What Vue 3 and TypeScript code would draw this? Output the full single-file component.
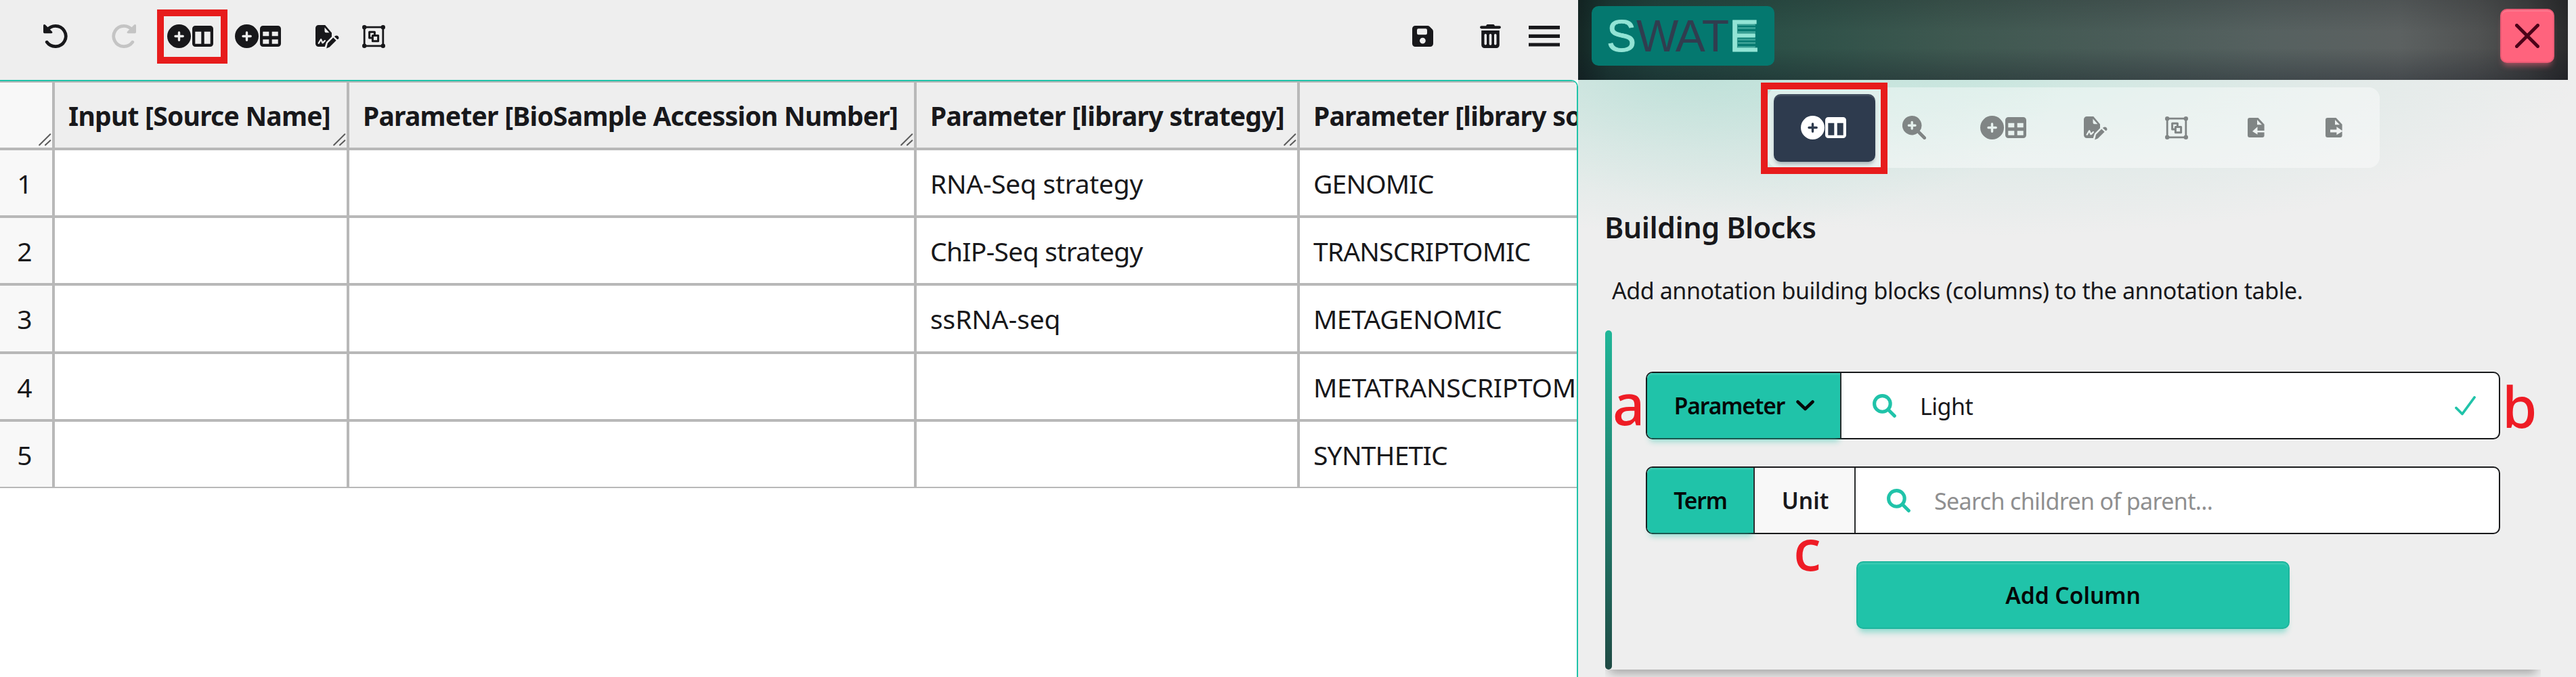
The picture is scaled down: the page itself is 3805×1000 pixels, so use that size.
<script setup lang="ts">
import { defineComponent, h } from 'vue'

interface Cell { text: string; track?: number }
interface Column { key: string; title: string; cells: Cell[] }

const blank = (): Cell[] => Array.from({ length: 5 }, () => ({ text: '' }))

const columns: Column[] = [
  { key: 'source-name', title: 'Input [Source Name]', cells: blank() },
  { key: 'accession', title: 'Parameter [BioSample Accession Number]', cells: blank() },
  {
    key: 'strategy',
    title: 'Parameter [library strategy]',
    cells: [
      { text: 'RNA-Seq strategy', track: -0.3 },
      { text: 'ChIP-Seq strategy', track: -0.7 },
      { text: 'ssRNA-seq', track: -0.1 },
      { text: '' },
      { text: '' },
    ],
  },
  {
    key: 'source',
    title: 'Parameter [library source]',
    cells: [
      { text: 'GENOMIC', track: -0.85 },
      { text: 'TRANSCRIPTOMIC', track: -0.85 },
      { text: 'METAGENOMIC', track: -0.5 },
      { text: 'METATRANSCRIPTOMIC', track: -0.3 },
      { text: 'SYNTHETIC', track: -0.8 },
    ],
  },
]

const rows = [0, 1, 2, 3, 4]

interface Glyph { w: number; h: number; fill?: string; stroke?: { d: string; width: number }[] }

const glyphs: Record<string, Glyph> = {
  undo: {
    w: 36, h: 35,
    fill: 'M1.5 0Q0 0 0 1.8V11.5Q0 13.2 1.7 13.2H12Q14.5 12.8 12.8 10.6L3 .8Q2.2 0 1.5 0Z',
    stroke: [{ d: 'M6 8.2C9 4.4 13 2.4 18 2.4A15.4 15.1 0 1 1 5.2 26.2', width: 4.7 }],
  },
  plus: {
    w: 35, h: 35,
    fill: 'M17.5 0A17.5 17.5 0 1 1 17.5 35A17.5 17.5 0 1 1 17.5 0ZM15.8 12V15.8H12A1.7 1.7 0 0 0 12 19.2H15.8V23.2A1.7 1.7 0 0 0 19.2 23.2V19.2H23.2A1.7 1.7 0 0 0 23.2 15.8H19.2V12A1.7 1.7 0 0 0 15.8 12Z',
  },
  columns: {
    w: 31, h: 31,
    fill: 'M4.5 0H26.5A4.5 4.5 0 0 1 31 4.5V26.5A4.5 4.5 0 0 1 26.5 31H4.5A4.5 4.5 0 0 1 0 26.5V4.5A4.5 4.5 0 0 1 4.5 0ZM4.3 8.8V26.7H13.3V8.8ZM17.7 8.8V26.7H26.7V8.8Z',
  },
  table: {
    w: 31, h: 31,
    fill: 'M4.5 0H26.5A4.5 4.5 0 0 1 31 4.5V26.5A4.5 4.5 0 0 1 26.5 31H4.5A4.5 4.5 0 0 1 0 26.5V4.5A4.5 4.5 0 0 1 4.5 0ZM4.3 8.8V15.3H13.3V8.8ZM17.7 8.8V15.3H26.7V8.8ZM4.3 20.2V26.7H13.3V20.2ZM17.7 20.2V26.7H26.7V20.2Z',
  },
  group: {
    w: 34, h: 34,
    fill: 'M3.2 0A3.2 3.2 0 1 1 3.2 6.4A3.2 3.2 0 1 1 3.2 0ZM30.8 0A3.2 3.2 0 1 1 30.8 6.4A3.2 3.2 0 1 1 30.8 0ZM3.2 27.6A3.2 3.2 0 1 1 3.2 34A3.2 3.2 0 1 1 3.2 27.6ZM30.8 27.6A3.2 3.2 0 1 1 30.8 34A3.2 3.2 0 1 1 30.8 27.6Z',
    stroke: [
      { d: 'M3.2 3.2H30.8V30.8H3.2Z', width: 2.8 },
      { d: 'M13.5 19H10.6V10.2H18.4V13.5', width: 3 },
      { d: 'M15.4 15.4H23.6V23.8H15.4Z', width: 3 },
    ],
  },
  save: {
    w: 31, h: 31,
    fill: 'M4.5 0H22.5Q24.4 0 25.7 1.3L29.7 5.3Q31 6.6 31 8.5V26.5A4.5 4.5 0 0 1 26.5 31H4.5A4.5 4.5 0 0 1 0 26.5V4.5A4.5 4.5 0 0 1 4.5 0ZM9.2 4.3A2.2 2.2 0 0 0 7 6.5V11.1A2.2 2.2 0 0 0 9.2 13.3H19.8A2.2 2.2 0 0 0 22 11.1V6.5A2.2 2.2 0 0 0 19.8 4.3ZM15.4 17.7A4.4 4.4 0 1 0 15.4 26.5A4.4 4.4 0 1 0 15.4 17.7Z',
  },
  trash: {
    w: 31, h: 35,
    fill: 'M9.5 1.2Q10 0 11.3 0H19.7Q21 0 21.5 1.2L22 2.2H28.8A2.1 2.1 0 0 1 28.8 6.5H2.2A2.1 2.1 0 0 1 2.2 2.2H9ZM2.2 9H28.8V30.6A4.4 4.4 0 0 1 24.4 35H6.6A4.4 4.4 0 0 1 2.2 30.6ZM8.2 14A1.8 1.8 0 0 0 6.5 15.8V29A1.8 1.8 0 0 0 10 29V15.8A1.8 1.8 0 0 0 8.2 14ZM15.5 14A1.8 1.8 0 0 0 13.7 15.8V29A1.8 1.8 0 0 0 17.3 29V15.8A1.8 1.8 0 0 0 15.5 14ZM22.8 14A1.8 1.8 0 0 0 21 15.8V29A1.8 1.8 0 0 0 24.5 29V15.8A1.8 1.8 0 0 0 22.8 14Z',
  },
  menu: { w: 46, h: 31, fill: 'M0 0H46V5.2H0ZM0 12.8H46V18H0ZM0 25.4H46V30.6H0Z' },
  signature: {
    w: 35, h: 36,
    fill: 'M4.5 1H14.2L24 12.4V18.3L16 26.2L14.3 31.2L13.8 33H4.5A4.5 4.5 0 0 1 0 28.5V5.5A4.5 4.5 0 0 1 4.5 1ZM13.5 4.5V10A2.2 2.2 0 0 0 15.7 12.2H20.4ZM3.6 27.6L7.2 21.6Q8.4 20.4 9.3 22L10.8 25.6L13.2 23.2Q15 22.4 15 24L14.6 25L11.6 28Q10 29 9.2 27.4L8 24.6L5.4 28.8Q3.8 29.8 3.6 27.6ZM26.2 19.5L30.6 23.8L20.8 33.6L16.2 35.4L18 27.8ZM27.9 17.9L29.2 16.9Q31.4 15.6 33.5 17.6Q35.3 19.8 33.8 21.6L32.4 22.3Z',
  },
  zoomIn: {
    w: 35, h: 35,
    fill: 'M14.2 0A14.2 14.2 0 0 1 25.6 22.6L34.3 31.2A2.2 2.2 0 0 1 31.2 34.3L22.6 25.6A14.2 14.2 0 1 1 14.2 0ZM12.5 9.4V12.5H9.4A1.7 1.7 0 0 0 9.4 15.9H12.5V19A1.7 1.7 0 0 0 15.9 19V15.9H19A1.7 1.7 0 0 0 19 12.5H15.9V9.4A1.7 1.7 0 0 0 12.5 9.4Z',
    stroke: [{ d: 'M25 25L32.6 32.6', width: 4.6 }],
  },
  search: {
    w: 35, h: 35,
    stroke: [
      { d: 'M14.4 2.6A11.8 11.8 0 1 1 14.4 26.2A11.8 11.8 0 1 1 14.4 2.6Z', width: 5.1 },
      { d: 'M23.5 23.5L32.3 32.3', width: 5.1 },
    ],
  },
  fileIn: {
    w: 25, h: 29,
    fill: 'M3 0H15.5L24.6 9.8V19H14.5V13.2L7 20L14.5 24.8V21.6H24.6V26A3 3 0 0 1 21.6 29H3A3 3 0 0 1 0 26V3A3 3 0 0 1 3 0ZM14 3V10.3H21Z',
  },
  fileOut: {
    w: 25, h: 29,
    fill: 'M3 0H15.5L24.6 9.8V19L16.4 13.2V17.6H7V21.4H16.4V25.2L24.6 20.2V26A3 3 0 0 1 21.6 29H3A3 3 0 0 1 0 26V3A3 3 0 0 1 3 0ZM14 3V10.3H21Z',
  },
  close: { w: 36, h: 36, stroke: [{ d: 'M2.5 2.5L33.5 33.5M33.5 2.5L2.5 33.5', width: 5 }] },
  chevron: { w: 27, h: 16, stroke: [{ d: 'M2.5 2.5L13.5 13L24.5 2.5', width: 4.6 }] },
  check: { w: 31, h: 29, stroke: [{ d: 'M2 17.5L11 26.5L29 2', width: 3.8 }] },
  grip: { w: 19, h: 19, stroke: [{ d: 'M1.2 17.3L17.3 1.2M10 17.3L17.3 10.4', width: 2 }] },
}

const Icon = defineComponent({
  props: { name: { type: String, required: true } },
  setup(props) {
    return () => {
      const g = glyphs[props.name]
      return h('svg', { width: g.w, height: g.h, viewBox: `0 0 ${g.w} ${g.h}`, 'aria-hidden': 'true' }, [
        g.fill ? h('path', { d: g.fill, fill: 'currentColor', 'fill-rule': 'evenodd' }) : null,
        ...(g.stroke ?? []).map((s) =>
          h('path', { d: s.d, fill: 'none', stroke: 'currentColor', 'stroke-width': s.width, 'stroke-linecap': 'round', 'stroke-linejoin': 'round' }),
        ),
      ])
    }
  },
})
</script>

<template>
  <div class="app">
    <section class="main">
      <header class="toolbar">
        <button class="tool undo"><Icon name="undo" /></button>
        <button class="tool redo"><Icon name="undo" /></button>
        <button class="tool add-column"><Icon name="plus" /><Icon name="columns" /><span class="mark mark-toolbar"></span></button>
        <button class="tool add-table"><Icon name="plus" /><Icon name="table" /></button>
        <button class="tool sign"><Icon name="signature" /></button>
        <button class="tool group"><Icon name="group" /></button>
        <span class="spacer"></span>
        <button class="tool save"><Icon name="save" /></button>
        <button class="tool trash"><Icon name="trash" /></button>
        <button class="tool menu"><Icon name="menu" /></button>
      </header>

      <div class="table-wrap">
        <div class="table-frame">
          <div class="grid">
            <div class="col index">
              <div class="head"><span class="grip"><Icon name="grip" /></span></div>
              <div v-for="r in rows" :key="r" class="cell">{{ r + 1 }}</div>
            </div>
            <div v-for="c in columns" :key="c.key" class="col" :class="c.key">
              <div class="head">{{ c.title }}<span class="grip"><Icon name="grip" /></span></div>
              <div v-for="r in rows" :key="r" class="cell">
                <span :style="{ letterSpacing: (c.cells[r].track ?? 0) + 'px' }">{{ c.cells[r].text }}</span>
              </div>
            </div>
          </div>
        </div>
      </div>
    </section>

    <aside class="side">
      <header class="banner">
        <div class="logo">
          <span class="lt mint">S</span><span class="lt">W</span><span class="lt a">A</span><span class="lt t">T</span><span class="lt mint e">E<i class="bars"></i></span>
        </div>
        <button class="close"><Icon name="close" /></button>
      </header>

      <div class="panel">
        <nav class="tabs">
          <button class="tab active"><Icon name="plus" /><Icon name="columns" /></button>
          <button class="tab t-zoom"><Icon name="zoomIn" /></button>
          <button class="tab t-table"><Icon name="plus" /><Icon name="table" /></button>
          <button class="tab t-sign"><Icon name="signature" /></button>
          <button class="tab t-group"><Icon name="group" /></button>
          <button class="tab t-in"><Icon name="fileIn" /></button>
          <button class="tab t-out"><Icon name="fileOut" /></button>
          <span class="mark mark-tab"></span>
        </nav>

        <h1>Building Blocks</h1>
        <p class="desc">Add annotation building blocks (columns) to the annotation table.</p>

        <div class="card">
          <div class="rail"></div>
          <div class="form">
            <div class="field">
              <button class="seg primary param"><span>Parameter</span><Icon name="chevron" /></button>
              <div class="input"><Icon name="search" /><span class="value">Light</span><span class="ok"><Icon name="check" /></span></div>
              <span class="note note-a">a</span>
              <span class="note note-b">b</span>
            </div>
            <div class="field">
              <button class="seg primary term">Term</button>
              <button class="seg unit">Unit</button>
              <div class="input"><Icon name="search" /><span class="value hint">Search children of parent...</span></div>
              <span class="note note-c">c</span>
            </div>
            <button class="submit">Add Column</button>
          </div>
        </div>
      </div>
    </aside>
  </div>
</template>

<style>
body { margin: 0; background: #fff; overflow: hidden; }
</style>

<style scoped>
* { box-sizing: border-box; }
svg { display: block; flex: none; }
button { font: inherit; color: inherit; border: 0; padding: 0; margin: 0; background: none; }
.app {
  display: flex;
  width: 3805px;
  height: 1000px;
  overflow: hidden;
  color: #18181b;
  font-family: "Noto Sans", "Open Sans", sans-serif;
}
.main { width: 2331px; flex: none; display: flex; flex-direction: column; background: #eee; }

.toolbar { height: 118px; flex: none; display: flex; align-items: center; padding: 0 27px 11px 64px; }
.tool { display: flex; align-items: center; position: relative; }
.redo { margin-left: 65px; color: #c4c4c4; transform: scaleX(-1); }
.add-column { margin-left: 46px; gap: 2px; }
.add-table { margin-left: 32px; gap: 2px; }
.sign { margin-left: 51px; }
.group { margin-left: 34px; }
.spacer { flex: 1; }
.trash { margin-left: 69px; }
.menu { margin-left: 41px; }
.mark { position: absolute; border: 10px solid #e71c1c; pointer-events: none; z-index: 3; }
.mark-toolbar { left: -15px; top: -22px; width: 104px; height: 80px; }

.table-wrap { flex: 1; min-height: 0; background: #fff; display: flex; }
.table-frame {
  flex: 1;
  min-width: 0;
  background: #fff;
  border: solid #20c3a9;
  border-width: 2px 2px 0 0;
  border-top-right-radius: 10px;
  overflow: hidden;
}
.grid { display: flex; border-top: 2px solid #b8b8b8; border-bottom: 2px solid #b8b8b8; width: 2700px; font-size: 39px; }
.col { flex: none; border-right: 4px solid #b8b8b8; }
.index { width: 81px; }
.source-name { width: 435px; }
.accession { width: 838px; }
.strategy { width: 566px; }
.source { width: 780px; }
.head {
  position: relative;
  height: 96px;
  display: flex;
  align-items: center;
  padding-left: 20px;
  background: #eee;
  font-weight: 700;
  letter-spacing: -0.75px;
  white-space: nowrap;
}
.grip { position: absolute; right: 1px; bottom: 2px; color: #5a5a5a; }
.index .head { background: #f8f8f8; }
.cell {
  height: 100px;
  border-top: 4px solid #b8b8b8;
  background: #fff;
  display: flex;
  align-items: center;
  padding-left: 20px;
  white-space: nowrap;
}
.cell:nth-child(4) { height: 101px; }
.index .cell { background: #f8f8f8; justify-content: center; padding: 0 4px 0 0; }

.side { flex: none; width: 1474px; background: #eee; display: flex; flex-direction: column; }
.banner {
  width: 1462px;
  height: 118px;
  flex: none;
  display: flex;
  align-items: flex-start;
  justify-content: space-between;
  padding: 9px 20px 0;
  background:
    linear-gradient(to bottom, rgba(10, 14, 18, 0.16), transparent 40%, transparent 60%, rgba(14, 18, 30, 0.3)),
    linear-gradient(to right, #142624 0, #1c3a35 3%, #22463f 8%, #2c5047 20%, #3e5850 38%, #4a5c58 55%, #566160 70%, #5c6161 83%, #505252 91%, #404141 96%, #2b2b2c 100%);
}
.logo { width: 270px; height: 88px; border-radius: 10px; background: #04786f; display: flex; padding-left: 22px; }
.lt { font: 66px/88px "Liberation Sans", Arial, sans-serif; color: #303d4f; height: 88px; position: relative; }
.lt.a { margin-left: -4.5px; }
.lt.t { margin-left: -5px; }
.lt.mint { color: #92e4d5; -webkit-text-stroke: 0.8px #92e4d5; }
.bars {
  position: absolute;
  left: 13px;
  top: 26px;
  width: 26px;
  height: 36px;
  border-radius: 0 3px 3px 0;
  background: repeating-linear-gradient(to bottom, rgba(146, 228, 213, 0.36) 0 3px, transparent 3px 5.5px);
}
.close {
  width: 80px;
  height: 80px;
  margin-top: 4px;
  border-radius: 10px;
  background: #ff637d;
  border: 2px solid #ea5a74;
  color: #4d0218;
  display: flex;
  align-items: center;
  justify-content: center;
  box-shadow: inset 0 2px 1px rgba(255, 255, 255, 0.15), 0 8px 8px -4px rgba(255, 99, 125, 0.5);
}

.panel {
  flex: 1;
  min-height: 0;
  overflow: hidden;
  padding: 11px 0 0 40px;
  background:
    radial-gradient(ellipse 560px 250px at 160px -20px, rgba(150, 214, 199, 0.46), rgba(150, 214, 199, 0.2) 50%, transparent),
    radial-gradient(ellipse 860px 250px at 620px -20px, rgba(160, 222, 206, 0.45), rgba(160, 214, 202, 0.17) 55%, transparent),
    #eee;
}
.tabs {
  position: relative;
  width: 904px;
  height: 119px;
  margin-left: 240px;
  display: flex;
  align-items: center;
  padding-left: 9px;
  border-radius: 16px;
  background: rgba(255, 255, 255, 0.42);
  color: #808585;
}
.tab { display: flex; align-items: center; gap: 2px; flex: none; }
.active {
  width: 150px;
  height: 100px;
  justify-content: center;
  gap: 1px;
  padding-right: 3px;
  border-radius: 10px;
  background: #2e3b4e;
  color: #fff;
  box-shadow: inset 0 3px 1px rgba(255, 255, 255, 0.1), 0 5px 6px -2px rgba(46, 59, 78, 0.4);
}
.t-zoom { margin-left: 40px; }
.t-table { margin-left: 80px; }
.t-sign { margin-left: 85px; }
.t-group { margin-left: 85px; }
.t-in { margin-left: 88px; }
.t-out { margin-left: 90px; }
.mark-tab { left: -10px; top: -7px; width: 187px; height: 135px; }

h1 { margin: 56px 0 0 -1px; font-size: 43px; font-weight: 600; letter-spacing: -0.5px; line-height: 64px; }
.desc { margin: 36px 0 0 10px; font-size: 34px; letter-spacing: -0.43px; line-height: 50px; }

.card { width: 1382px; height: 501px; margin-top: 34px; display: flex; box-shadow: 0 12px 14px -6px rgba(0, 0, 0, 0.3); background: #eee; clip-path: inset(0 0 -30px 0); }
.rail { width: 10px; flex: none; border-radius: 5px; background: linear-gradient(#20b698, #1f4a44); }
.form { width: 1262px; margin: 61px 0 0 50px; display: flex; flex-direction: column; gap: 40px; }
.field { position: relative; height: 100px; flex: none; display: flex; font-size: 34px; border: 2px solid #18191b; border-radius: 10px; background: #fff; }
.seg { display: flex; align-items: center; font-size: 33.5px; font-weight: 600; border-right: 2px solid #2b2d2e; background: #f8f8f8; justify-content: center; }
.primary {
  background: #20c3a9;
  color: #050808;
  border-radius: 8px 0 0 8px;
  letter-spacing: -1.1px;
  box-shadow: inset 0 3px 1px rgba(255, 255, 255, 0.1), 0 9px 8px -4px rgba(32, 195, 169, 0.45);
}
.param { width: 287px; gap: 17px; padding-left: 2px; }
.term { width: 159px; }
.unit { width: 149px; padding-left: 2px; }
.input { flex: 1; display: flex; align-items: center; padding-left: 46px; color: #20c3a9; }
.value { margin-left: 35px; color: #18181b; letter-spacing: -0.5px; position: relative; top: 1px; }
.hint { color: #8f8f90; letter-spacing: -0.63px; }
.ok { margin-left: auto; margin-right: 34px; }
.submit {
  width: 640px;
  height: 100px;
  margin-left: 311px;
  flex: none;
  border-radius: 10px;
  background: #20c3a9;
  border: 2px solid #1db59d;
  font-size: 33.5px;
  font-weight: 600;
  color: #050808;
  box-shadow: inset 0 3px 1px rgba(255, 255, 255, 0.1), 0 9px 8px -4px rgba(32, 195, 169, 0.45);
}
.note { position: absolute; font-size: 83px; line-height: 83px; font-weight: 500; color: #ee1c25; z-index: 4; }
.note-a { left: -51px; top: 3px; }
.note-b { left: 1263px; top: 7px; }
.note-c { left: 216px; top: 78px; }
</style>
